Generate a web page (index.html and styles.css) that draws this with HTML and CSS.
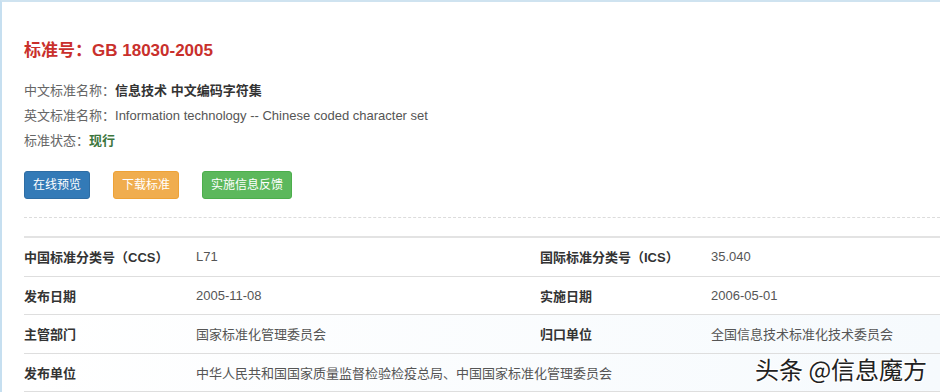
FILE: index.html
```html
<!DOCTYPE html>
<html lang="zh-CN">
<head>
    <meta charset="utf-8">
    <title>GB 18030-2005</title>
    <link rel="stylesheet" href="styles.css">
</head>
<body>
<div class="panel">
    <h1 class="std-title">标准号：GB 18030-2005</h1>
    <div class="info">
        <p><span class="key">中文标准名称：</span><b>信息技术 中文编码字符集</b></p>
        <p><span class="key">英文标准名称：</span>Information technology -- Chinese coded character set</p>
        <p><span class="key">标准状态：</span><b class="status">现行</b></p>
    </div>
    <div class="actions">
        <a href="#" class="btn btn-blue">在线预览</a>
        <a href="#" class="btn btn-orange">下载标准</a>
        <a href="#" class="btn btn-green">实施信息反馈</a>
    </div>
    <div class="divider"></div>
    <div class="details">
        <div class="row">
            <div class="label">中国标准分类号（CCS）</div>
            <div class="value">L71</div>
            <div class="label">国际标准分类号（ICS）</div>
            <div class="value">35.040</div>
        </div>
        <div class="row">
            <div class="label">发布日期</div>
            <div class="value">2005-11-08</div>
            <div class="label">实施日期</div>
            <div class="value">2006-05-01</div>
        </div>
        <div class="row tinted">
            <div class="label">主管部门</div>
            <div class="value">国家标准化管理委员会</div>
            <div class="label">归口单位</div>
            <div class="value">全国信息技术标准化技术委员会</div>
        </div>
        <div class="row tinted">
            <div class="label">发布单位</div>
            <div class="value wide">中华人民共和国国家质量监督检验检疫总局、中国国家标准化管理委员会</div>
        </div>
    </div>
</div>
<div class="watermark">头条 @信息魔方</div>
</body>
</html>
```

FILE: styles.css
```css
html, body {
    margin: 0;
    height: 100%;
    overflow: hidden;
    background: #fff;
}

body {
    font-family: "Liberation Sans", Arial, "Noto Sans CJK SC", sans-serif;
    font-size: 13px;
    color: #555;
}

.panel {
    box-sizing: border-box;
    height: 100%;
    overflow: hidden;
    border-top: 2px solid #cfe3f0;
    border-left: 2px solid #c6dff0;
    padding: 37px 0 0 22px;
}

.std-title {
    margin: 0;
    font-size: 17px;
    line-height: 24px;
    font-weight: bold;
    color: #c9302c;
}

.info {
    margin-top: 15px;
}

.info p {
    margin: 0;
    line-height: 25px;
}

.info .key {
    color: #666;
}

.info b {
    color: #333;
}

.info .status {
    color: #3c763d;
}

.actions {
    display: flex;
    gap: 23px;
    margin-top: 18px;
}

.btn {
    display: inline-block;
    padding: 4px 8px;
    font-size: 12px;
    line-height: 18px;
    color: #fff;
    text-decoration: none;
    border: 1px solid transparent;
    border-radius: 3px;
}

.btn-blue {
    background-color: #337ab7;
    border-color: #2e6da4;
}

.btn-orange {
    background-color: #f0ad4e;
    border-color: #eea236;
}

.btn-green {
    background-color: #5cb85c;
    border-color: #4cae4c;
}

.divider {
    margin-top: 18px;
    border-top: 1px dashed #dcdcdc;
}

.details {
    margin-top: 18px;
    border-top: 2px solid #e3e3e3;
}

.row {
    display: grid;
    grid-template-columns: 172px 344px 171px 1fr;
    align-items: center;
    height: 37.5px;
    border-bottom: 1px solid #dedede;
}

.row.tinted {
    background: linear-gradient(to right, #fff, #f6fafd);
}

.row .label {
    font-weight: bold;
    color: #333;
}

.row .value {
    color: #555;
}

.row .wide {
    grid-column: span 3;
}

.watermark {
    position: absolute;
    left: 755px;
    top: 354px;
    font-family: "Noto Sans CJK SC", sans-serif;
    font-size: 24px;
    line-height: 30px;
    color: #222;
    text-shadow: 1px 1px 0 #fff, -1px -1px 0 #fff, 1px -1px 0 #fff, -1px 1px 0 #fff;
}
```
